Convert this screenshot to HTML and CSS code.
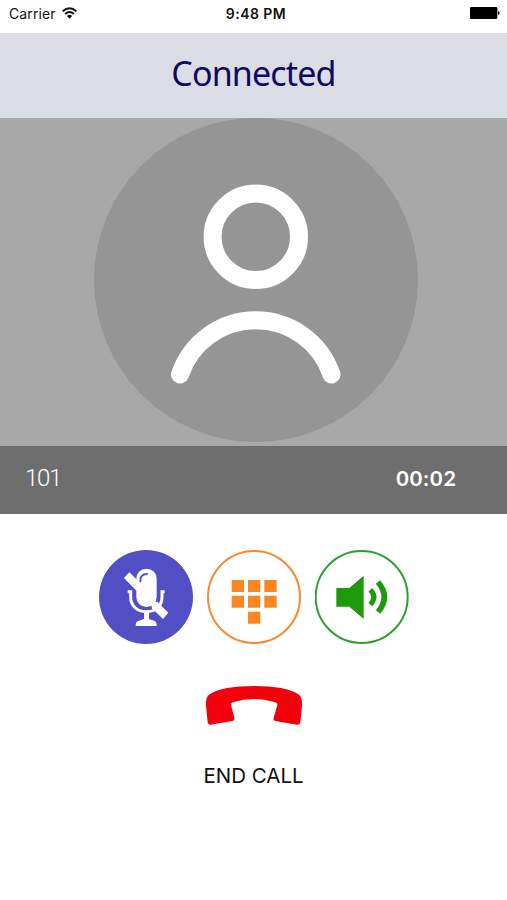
FILE: index.html
```html
<!DOCTYPE html>
<html lang="en">
<head>
<meta charset="utf-8">
<title>Call</title>
<link rel="stylesheet" href="styles.css">
</head>
<body>
<div class="status">
  <div class="status-left">
    <span class="carrier">Carrier</span>
    <svg class="wifi" viewBox="0 0 45 36"><g fill="none" stroke="#111" stroke-width="6"><path d="M2 13Q22.500-5 43 13"/><path d="M9.500 21Q22.500 9 35.500 21"/></g><path d="M14.500 27Q22.500 19 30.500 27L22.500 35Z" fill="#111"/></svg>
  </div>
  <span class="clock">9:48 PM</span>
  <div class="status-right">
    <svg class="battery" viewBox="0 0 90 36"><rect width="82" height="36" rx="4"/><path d="M84 12q5 2 5 6t-5 6z"/></svg>
  </div>
</div>
<header class="header"><h1 class="title">Connected</h1></header>
<main>
  <div class="photo">
    <svg class="avatar" viewBox="94 118.500 324 324"><circle cx="256" cy="280.500" r="162" fill="#959595"/><g fill="none" stroke="#fff" stroke-width="18" stroke-linecap="round"><circle cx="255.800" cy="237.300" r="43.200"/><path d="M180 375A80 80 0 0 1 331.500 375"/></g></svg>
  </div>
  <div class="info"><span class="number">101</span><span class="timer">00:02</span></div>
  <div class="controls">
    <button class="control" aria-label="Mute">
      <svg viewBox="28 31 282 282"><circle cx="169" cy="172" r="141" fill="#524fc4"/>
        <path d="M114 156h9v17c0 26 20 43 47 43s47-17 47-43v-17h8" fill="none" stroke="#fff" stroke-width="9"/>
        <rect x="140" y="87" width="61" height="115" rx="30" fill="#fff"/>
        <path d="M152 125q-1-22 20-22" fill="none" stroke="#524fc4" stroke-width="6" stroke-linecap="round"/>
        <path d="M163 216h15v22l17 6q6 2 6 15h-63q0-13 7-15l18-6z" fill="#fff"/>
        <path d="M103 115 119 98 150 128 141 154Z" fill="#fff"/>
        <path d="M183 188 203 186 236 219 220 238 187 206Z" fill="#fff"/>
      </svg>
    </button>
    <button class="control" aria-label="Keypad">
      <svg viewBox="21 31 282 282"><circle cx="162" cy="172" r="138" fill="#fff" stroke="#f58a32" stroke-width="6"/><path fill="#f98822" d="M95 121h37v36H95zM144 121h37v36h-37zM193 121h37v36h-37zM95 168h37v36H95zM144 168h37v36h-37zM193 168h37v36h-37zM144 216h37v36h-37z"/></svg>
    </button>
    <button class="control" aria-label="Speaker">
      <svg viewBox="21 31 282 282"><circle cx="161" cy="172" r="138" fill="#fff" stroke="#2ca02c" stroke-width="6"/><path fill="#1c9a0b" d="M85 145h39l43-37v130l-43-37H85z"/><g fill="none" stroke="#1c9a0b"><path d="M187 150Q208 172 187 195" stroke-width="15"/><path d="M210 127Q248 172 210 217" stroke-width="17"/></g></svg>
    </button>
  </div>
  <button class="end">
    <svg class="handset" viewBox="45 45 294 120"><path fill="#f2000b" d="M48 108C47 96 48 82 57 74C83 56 130 48 192 48S301 56 327 74C336 82 337 96 336 108L331 157Q330 165 321 164L256 153Q248 151 251 143L262 106Q263 100 256 97Q223 87 192 87T128 97Q122 99 123 106L133 143Q135 151 127 153L62 164Q54 165 53 157Z"/></svg>
    <span class="end-label">END CALL</span>
  </button>
</main>
</body>
</html>
```
FILE: styles.css
```css
* { box-sizing: border-box; }
body { margin: 0; background: #fff; font-family: Inter, "Liberation Sans", sans-serif; color: #111; }
button { border: 0; padding: 0; background: none; font: inherit; color: inherit; }
svg { display: block; }
.status { height: 33px; display: grid; grid-template-columns: 1fr auto 1fr; align-items: start; padding: 5px 7px 0 9px; line-height: 18px; }
.status-left { display: flex; gap: 6px; }
.carrier { font-size: 14px; letter-spacing: .1px; }
.wifi { width: 15px; height: 12px; margin-top: 2px; }
.clock { font-size: 14px; font-weight: 600; letter-spacing: .45px; padding-left: 3px; }
.status-right { display: flex; justify-content: flex-end; }
.battery { width: 30px; height: 12px; margin-top: 2px; }
.header { height: 85px; background: #dadce6; display: flex; align-items: center; justify-content: center; padding-bottom: 5px; }
.title { margin: 0; font: 400 34px/46px "Noto Sans", sans-serif; letter-spacing: -.85px; color: #10095b; }
.photo { height: 327.500px; background: #a8a8a8; display: flex; justify-content: center; padding: 0 0 0 5px; }
.avatar { width: 324px; height: 324px; margin-top: 0; }
.info { height: 68px; background: #6e6e6e; color: #fff; display: flex; align-items: center; justify-content: space-between; padding: 0 51px 3px 25px; }
.number { font: 300 24px/30px Roboto, sans-serif; letter-spacing: -1.300px; }
.timer { font: 700 21.500px/30px Lato, sans-serif; letter-spacing: 1.100px; margin-right: -1.100px; }
.controls { display: flex; gap: 14px; padding: 36.500px 0 0 99.300px; }
.control { width: 94px; height: 94px; }
.end { display: flex; flex-direction: column; align-items: center; margin: 41px auto 0; gap: 39px; }
.handset { width: 98px; height: 40px; margin-left: 1px; }
.end-label { font-size: 20.500px; line-height: 24px; }
```
